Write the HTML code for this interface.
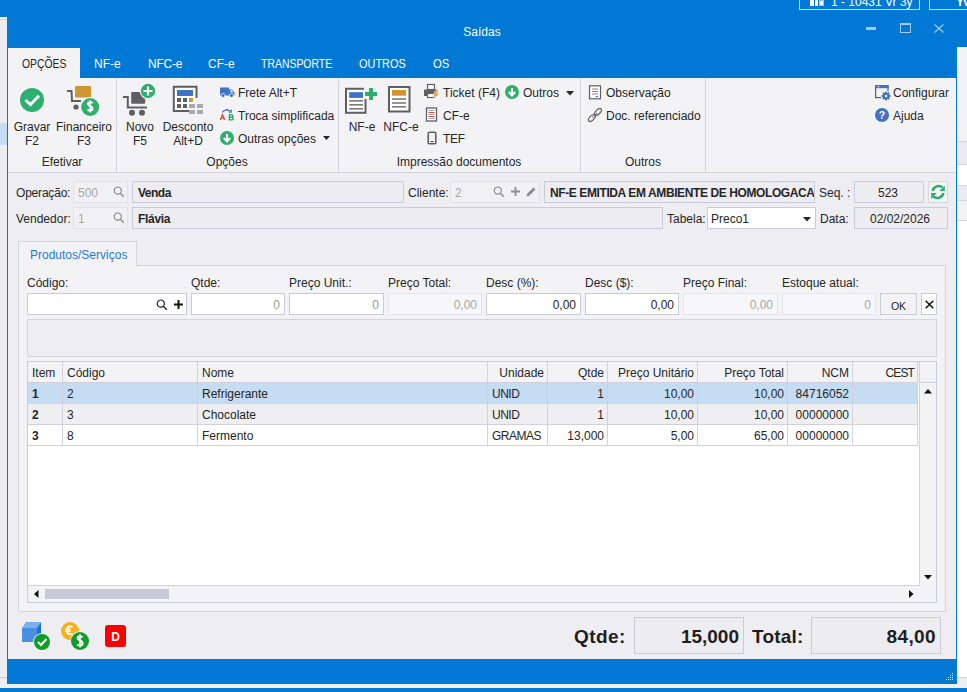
<!DOCTYPE html>
<html><head><meta charset="utf-8">
<style>
*{margin:0;padding:0;box-sizing:border-box}
html,body{width:967px;height:692px;overflow:hidden;background:#edecf1;font-family:"Liberation Sans",sans-serif;font-size:12px;line-height:15px;color:#262626}
.a{position:absolute;white-space:nowrap}
.c{text-align:center}
.r{text-align:right}
svg{position:absolute;overflow:visible}
.box{position:absolute;border:1px solid #c9cbdc;background:#edecf1}
.dis{position:absolute;border:1px solid #e2e1e8;background:#f1f0f5}
.dis2{position:absolute;border:1px solid #e4e4eb;background:#f7f7fa}
.wht{position:absolute;border:1px solid #c9cbdc;background:#fff}
.sep{position:absolute;width:1px;background:#d3d3e0}
</style></head><body>
<!-- background app -->
<div class="a" style="left:0;top:0;width:967px;height:17px;background:#0078d4"></div>
<div class="a" style="left:950px;top:0;width:17px;height:47px;background:#0078d4"></div>
<div class="a" style="left:0;top:17px;width:7px;height:2px;background:#fff"></div>
<div class="a" style="left:0;top:19px;width:7px;height:1px;background:#cfcfd8"></div>
<div class="a" style="left:0;top:123px;width:7px;height:22px;background:#c6dcf4"></div>
<div class="a" style="left:0;top:677px;width:7px;height:1px;background:#c8c8d0"></div>
<!-- right strip -->
<div class="a" style="left:957px;top:47px;width:10px;height:645px;background:#fff"></div>
<div class="a" style="left:957px;top:47px;width:10px;height:94px;background:#f3f3f6"></div>
<div class="a" style="left:957px;top:141px;width:10px;height:24px;background:#ebeaf0;border-top:1px solid #d6d6e0;border-bottom:1px solid #d6d6e0"></div>
<div class="a" style="left:957px;top:185px;width:10px;height:16px;background:#ebeaf0;border-top:1px solid #d6d6e0;border-bottom:1px solid #d6d6e0"></div>
<div class="a" style="left:957px;top:201px;width:10px;height:20px;background:#f3f3f6;border-bottom:1px solid #d6d6e0"></div>
<div class="a" style="left:957px;top:677px;width:10px;height:11px;background:#eeedf2;border-top:1px solid #d0d0d8"></div>
<div class="a" style="left:0;top:684px;width:967px;height:4px;background:#eeedf2"></div>
<div class="a" style="left:0;top:688px;width:967px;height:4px;background:#0078d4"></div>
<!-- top-right buttons of bg app -->
<div class="a" style="left:799px;top:-5px;width:121px;height:15px;border:1px solid #c8dcf0"></div>
<div class="a" style="left:929px;top:-5px;width:60px;height:15px;border:1px solid #c8dcf0"></div>
<div class="a" style="left:810px;top:0;width:4px;height:6px;background:#fff"></div>
<div class="a" style="left:815px;top:0;width:3px;height:6px;background:#fff"></div>
<div class="a" style="left:819px;top:0;width:5px;height:6px;background:#fff;border:1px solid #9cc3ea"></div>
<div class="a" style="left:831px;top:-5px;color:#fff;font-size:12px;line-height:15px">1 - 10431 Vr 3y</div>
<div class="a" style="left:956px;top:-5px;color:#fff;font-size:12px;line-height:15px;font-weight:bold">Yv</div>
<!-- window -->
<div class="a" style="left:7px;top:10px;width:950px;height:674px;background:#0078d4"></div>
<div class="a" style="left:8px;top:78px;width:948px;height:581px;background:#eeedf2"></div>
<div class="a c" style="left:444px;top:25px;width:76px;color:#fff">Saídas</div>
<!-- window controls -->
<div class="a" style="left:866px;top:27px;width:10px;height:3px;background:#a6c9ec"></div>
<div class="a" style="left:900px;top:23px;width:11px;height:10px;border:1px solid #a6c9ec;border-top-width:2px"></div>
<svg style="left:934px;top:24px" width="10" height="9"><path d="M0.5 0.5L9.5 8.5M9.5 0.5L0.5 8.5" stroke="#a6c9ec" stroke-width="1.2"/></svg>

<!-- ribbon -->
<div class="a" style="left:8px;top:78px;width:948px;height:95px;background:#f3f3f6;border-bottom:1px solid #d3d3e0"></div>
<div class="a" style="left:8px;top:48px;width:72px;height:30px;background:#f3f3f6"></div>
<div class="a" style="left:22px;top:57px;transform:scaleX(0.865);transform-origin:0 0">OPÇÕES</div>
<div class="a" style="left:94px;top:57px;color:#fff">NF-e</div>
<div class="a" style="left:148px;top:57px;color:#fff;letter-spacing:-0.2px">NFC-e</div>
<div class="a" style="left:208px;top:57px;color:#fff">CF-e</div>
<div class="a" style="left:261px;top:57px;color:#fff;transform:scaleX(0.87);transform-origin:0 0">TRANSPORTE</div>
<div class="a" style="left:359px;top:57px;color:#fff;transform:scaleX(0.91);transform-origin:0 0">OUTROS</div>
<div class="a" style="left:433px;top:57px;color:#fff;transform:scaleX(0.94);transform-origin:0 0">OS</div>

<div class="sep" style="left:116px;top:78px;height:94px"></div>
<div class="sep" style="left:338px;top:78px;height:94px"></div>
<div class="sep" style="left:580px;top:78px;height:94px"></div>
<div class="sep" style="left:705px;top:78px;height:94px"></div>

<!-- group labels -->
<div class="a c" style="left:12px;top:155px;width:100px">Efetivar</div>
<div class="a c" style="left:177px;top:155px;width:100px">Opções</div>
<div class="a c" style="left:389px;top:155px;width:140px">Impressão documentos</div>
<div class="a c" style="left:593px;top:155px;width:100px">Outros</div>

<!-- big buttons -->
<div class="a c" style="left:1px;top:120px;width:62px">Gravar</div>
<div class="a c" style="left:1px;top:134px;width:62px">F2</div>
<div class="a c" style="left:53px;top:120px;width:62px">Financeiro</div>
<div class="a c" style="left:53px;top:134px;width:62px">F3</div>
<div class="a c" style="left:109px;top:120px;width:62px">Novo</div>
<div class="a c" style="left:109px;top:134px;width:62px">F5</div>
<div class="a c" style="left:157px;top:120px;width:62px">Desconto</div>
<div class="a c" style="left:157px;top:134px;width:62px">Alt+D</div>
<div class="a c" style="left:331px;top:120px;width:62px">NF-e</div>
<div class="a c" style="left:370px;top:120px;width:62px">NFC-e</div>

<!-- small buttons -->
<div class="a" style="left:238px;top:86px">Frete Alt+T</div>
<div class="a" style="left:238px;top:109px">Troca simplificada</div>
<div class="a" style="left:238px;top:132px">Outras opções</div>
<svg style="left:323px;top:136px" width="7" height="4"><path d="M0 0H7L3.5 4Z" fill="#262626"/></svg>
<div class="a" style="left:443px;top:86px">Ticket (F4)</div>
<div class="a" style="left:443px;top:109px">CF-e</div>
<div class="a" style="left:443px;top:132px;letter-spacing:-0.3px">TEF</div>
<div class="a" style="left:523px;top:86px">Outros</div>
<svg style="left:566px;top:91px" width="8" height="5"><path d="M0 0H8L4 4.5Z" fill="#262626"/></svg>
<div class="a" style="left:606px;top:86px">Observação</div>
<div class="a" style="left:606px;top:109px">Doc. referenciado</div>
<div class="a" style="left:893px;top:86px">Configurar</div>
<div class="a" style="left:893px;top:109px">Ajuda</div>

<!-- ICONS -->
<!-- Gravar -->
<svg style="left:20px;top:88px" width="24" height="24"><circle cx="12" cy="12" r="12" fill="#2eaf6e"/><path d="M5.5 12L10.5 16.5L19 7.8" fill="none" stroke="#fff" stroke-width="3"/></svg>
<!-- Financeiro -->
<svg style="left:66px;top:85px" width="34" height="32"><rect x="9" y="1" width="16" height="11.5" rx="1" fill="#cf9531"/><path d="M1 6H5.5L6 16H15" fill="none" stroke="#5f5f5f" stroke-width="2"/><circle cx="10" cy="22" r="2.6" fill="#5f5f5f"/><circle cx="24.2" cy="22" r="10" fill="#f3f3f6"/><circle cx="24.2" cy="22" r="9" fill="#2eaf6e"/><path d="M26.6 18.3C26 17.5 25.1 17.2 24.2 17.2C22.9 17.2 22 17.9 22 19C22 21.4 26.6 20.6 26.6 23.6C26.6 24.8 25.6 25.7 24.2 25.7C23.2 25.7 22.2 25.3 21.6 24.5" fill="none" stroke="#fff" stroke-width="1.9"/><path d="M24.2 15.3V27.6" stroke="#fff" stroke-width="1.5"/></svg>
<!-- Novo -->
<svg style="left:122px;top:83px" width="34" height="34"><path d="M1 14H5.8V24.5H25" fill="none" stroke="#5f5f5f" stroke-width="2"/><rect x="9.2" y="9" width="14" height="11.7" rx="1" fill="#5f5f5f"/><circle cx="10" cy="29.8" r="3" fill="#5f5f5f"/><circle cx="20" cy="29.8" r="3" fill="#5f5f5f"/><circle cx="26" cy="8" r="8.4" fill="#f3f3f6"/><circle cx="26" cy="8" r="7.2" fill="#2eaf6e"/><path d="M26 3.5V12.5M21.5 8H30.5" stroke="#fff" stroke-width="2.2"/></svg>
<!-- Desconto -->
<svg style="left:172px;top:85px" width="34" height="30"><path d="M24.5 13V1.8H1.8V26H18" fill="#fff" stroke="#5f5f5f" stroke-width="2"/><rect x="5" y="5" width="16" height="6" fill="#3d72c4"/><rect x="5" y="13" width="4" height="4" fill="#5f5f5f"/><rect x="11" y="13" width="4" height="4" fill="#5f5f5f"/><rect x="17" y="13" width="4" height="4" fill="#d09530"/><rect x="5" y="19" width="4" height="4" fill="#5f5f5f"/><rect x="11" y="19" width="4" height="4" fill="#5f5f5f"/><rect x="17" y="19" width="6" height="4" fill="#aaa"/><rect x="25" y="19" width="6" height="4" fill="#aaa"/><rect x="17" y="25" width="6" height="4" fill="#aaa"/><rect x="25" y="25" width="6" height="4" fill="#aaa"/></svg>
<!-- Frete truck -->
<svg style="left:220px;top:87px" width="15" height="11"><path d="M0 0.5H9V2.5H12L14.5 5.5V8.5H0Z" fill="#3d72c4"/><circle cx="3" cy="8.5" r="2" fill="#3d72c4" stroke="#f3f3f6" stroke-width="0.8"/><circle cx="11.5" cy="8.5" r="2" fill="#3d72c4" stroke="#f3f3f6" stroke-width="0.8"/><path d="M10.5 3.3H11.8L13.3 5.2H10.5Z" fill="#f3f3f6"/></svg>
<!-- AB -->
<svg style="left:217px;top:105px" width="20" height="18"><path d="M3.3 14.9L5.5 9.6L7.7 14.9M4.1 13H6.9" fill="none" stroke="#d9482b" stroke-width="1.25"/><path d="M12.4 9.6V14.9H14.5C15.7 14.9 16.3 14.3 16.3 13.4C16.3 12.6 15.7 12.1 14.6 12.1H12.4M12.4 9.6H14.3C15.2 9.6 15.8 10.1 15.8 10.8C15.8 11.6 15.2 12.1 14.4 12.1" fill="none" stroke="#22a55a" stroke-width="1.35"/><path d="M5.3 7.4Q8.8 3 12.6 6.1" fill="none" stroke="#3d72c4" stroke-width="1.4"/><path d="M14.8 4V7.7H11.3Z" fill="#3d72c4"/></svg>
<!-- down circle -->
<svg style="left:220px;top:131px" width="14" height="14"><circle cx="7" cy="7" r="7" fill="#2eaf6e"/><path d="M7 3V10M3.8 7L7 10.5L10.2 7" fill="none" stroke="#fff" stroke-width="2"/></svg>
<!-- NF-e icon -->
<svg style="left:344px;top:87px" width="34" height="28"><path d="M20 1.8H2V25.8H21.5V12" fill="#fff" stroke="#5f5f5f" stroke-width="2"/><rect x="5.2" y="5.2" width="13.8" height="5.7" fill="#3d72c4"/><rect x="5.2" y="13" width="13.8" height="1.6" fill="#7a7a7a"/><rect x="5.2" y="17" width="13.8" height="1.6" fill="#7a7a7a"/><rect x="5.2" y="21" width="13.8" height="1.6" fill="#7a7a7a"/><path d="M27 1V13M21 7H33" stroke="#2eaf6e" stroke-width="4"/></svg>
<!-- NFC-e icon -->
<svg style="left:387px;top:85px" width="24" height="28"><rect x="2" y="2" width="20.5" height="24.5" fill="#fff" stroke="#5f5f5f" stroke-width="2"/><rect x="5" y="5" width="14" height="5.7" fill="#d09530"/><rect x="5" y="13.2" width="14" height="1.6" fill="#7a7a7a"/><rect x="5" y="17.2" width="14" height="1.6" fill="#7a7a7a"/><rect x="5" y="21" width="14" height="1.6" fill="#7a7a7a"/></svg>
<!-- Printer -->
<svg style="left:423px;top:83px" width="18" height="18"><rect x="4.5" y="1.5" width="7" height="5" fill="#fff" stroke="#5f5f5f" stroke-width="1.2"/><path d="M1 6.5H14.5V13H1Z" fill="#5f5f5f"/><rect x="4.5" y="10.5" width="7" height="4" fill="#fff" stroke="#5f5f5f" stroke-width="1.2"/><path d="M13.5 7L9.5 12H12.5L10 16.5L16.5 10.5H13.5L15.5 7Z" fill="#e0a030" stroke="#f3f3f6" stroke-width="0.6"/></svg>
<!-- CF-e -->
<svg style="left:425px;top:107px" width="13" height="15"><rect x="1.5" y="1" width="10" height="13" fill="#fff" stroke="#5f5f5f" stroke-width="1.3"/><path d="M3.5 3.5H9.5M3.5 7.5H9.5M3.5 11.5H9.5" stroke="#9aa4ad" stroke-width="0.9"/><path d="M3.5 5.5H9.5M3.5 9.5H9.5" stroke="#e04a3a" stroke-width="1"/></svg>
<!-- TEF phone -->
<svg style="left:427px;top:131px" width="10" height="14"><rect x="1.2" y="1.2" width="7.6" height="11.6" rx="1.2" fill="none" stroke="#5f5f5f" stroke-width="1.6"/><rect x="3.5" y="10" width="3" height="1.2" fill="#5f5f5f"/></svg>
<!-- Outros down circle -->
<svg style="left:505px;top:85px" width="14" height="14"><circle cx="7" cy="7" r="7" fill="#2eaf6e"/><path d="M7 3V10M3.8 7L7 10.5L10.2 7" fill="none" stroke="#fff" stroke-width="2"/></svg>
<!-- Observacao -->
<svg style="left:588px;top:85px" width="14" height="15"><rect x="1.5" y="0.8" width="11" height="13" fill="#fff" stroke="#5f5f5f" stroke-width="1.2"/><path d="M4 4H10M4 6.5H10M4 9H10" stroke="#7a7a7a" stroke-width="0.9"/><path d="M7.5 11.5H10" stroke="#3d72c4" stroke-width="1"/></svg>
<!-- link -->
<svg style="left:584px;top:104px" width="22" height="22"><g fill="none" stroke="#5f5f5f" stroke-width="1.2"><ellipse cx="14" cy="7.9" rx="2.2" ry="4.3" transform="rotate(45 14 7.9)"/><ellipse cx="7.9" cy="14" rx="2.2" ry="4.3" transform="rotate(45 7.9 14)"/><path d="M8.5 13.5L13.5 8.5" stroke-dasharray="1 0.8"/></g></svg>
<!-- Configurar -->
<svg style="left:874px;top:85px" width="18" height="18"><rect x="1.6" y="0.6" width="12.4" height="12" fill="none" stroke="#5f5f5f" stroke-width="1.2"/><rect x="1" y="0" width="13.6" height="3.2" fill="#3d72c4"/><path d="M3.2 1.2H5.8L4.5 2.4Z" fill="#fff"/><circle cx="12.1" cy="11" r="5.2" fill="#f3f3f6"/><rect x="11.1" y="6.6" width="2" height="8.8" transform="rotate(0 12.1 11)" fill="#3d72c4"/><rect x="11.1" y="6.6" width="2" height="8.8" transform="rotate(45 12.1 11)" fill="#3d72c4"/><rect x="11.1" y="6.6" width="2" height="8.8" transform="rotate(90 12.1 11)" fill="#3d72c4"/><rect x="11.1" y="6.6" width="2" height="8.8" transform="rotate(135 12.1 11)" fill="#3d72c4"/><circle cx="12.1" cy="11" r="3.3" fill="#3d72c4"/><circle cx="12.1" cy="11" r="1.3" fill="#f3f3f6"/></svg>
<!-- Ajuda -->
<svg style="left:875px;top:108px" width="14" height="14"><circle cx="7" cy="7" r="7" fill="#3d72c4"/><text x="7" y="11" text-anchor="middle" font-family="Liberation Sans" font-weight="bold" font-size="10.5" fill="#fff">?</text></svg>

<!-- FORM -->
<!-- FORM header rows -->
<div class="a" style="left:16px;top:186px;letter-spacing:-0.2px">Operação:</div>
<div class="dis" style="left:73px;top:181px;width:55px;height:22px"></div>
<div class="a" style="left:78px;top:186px;color:#a8a8a8">500</div>
<svg style="left:113px;top:186px" width="12" height="12"><circle cx="4.8" cy="4.6" r="3.6" fill="none" stroke="#8c8c8c" stroke-width="1.2"/><path d="M7.3 7.2L10.8 10.8" stroke="#8c8c8c" stroke-width="1.4"/></svg>
<div class="box" style="left:132px;top:181px;width:272px;height:22px"></div>
<div class="a" style="left:138px;top:186px;font-weight:bold;letter-spacing:-0.5px">Venda</div>
<div class="a" style="left:408px;top:186px">Cliente:</div>
<div class="dis" style="left:450px;top:181px;width:90px;height:22px"></div>
<div class="a" style="left:455px;top:186px;color:#a8a8a8">2</div>
<svg style="left:493px;top:186px" width="12" height="12"><circle cx="4.8" cy="4.6" r="3.6" fill="none" stroke="#8c8c8c" stroke-width="1.2"/><path d="M7.3 7.2L10.8 10.8" stroke="#8c8c8c" stroke-width="1.4"/></svg>
<svg style="left:511px;top:187px" width="9" height="9"><path d="M4.5 0V9M0 4.5H9" stroke="#8c8c8c" stroke-width="1.8"/></svg>
<svg style="left:525px;top:186px" width="12" height="12"><path d="M1.5 10.5L2.2 7.8L8.5 1.5L10.5 3.5L4.2 9.8Z" fill="#8c8c8c"/></svg>
<div class="box" style="left:544px;top:181px;width:271px;height:22px;overflow:hidden"><div class="a" style="left:5px;top:4px;font-weight:bold;letter-spacing:-0.4px">NF-E EMITIDA EM AMBIENTE DE HOMOLOGACA</div></div>
<div class="a" style="left:819px;top:186px">Seq. :</div>
<div class="box" style="left:854px;top:181px;width:70px;height:22px"></div>
<div class="a c" style="left:854px;top:186px;width:68px">523</div>
<div class="a" style="left:928px;top:181px;width:20px;height:22px;border:1px solid #d6d6df;background:#f3f3f6"></div>
<svg style="left:925px;top:180px" width="27" height="25"><g fill="none" stroke="#2eaf6e" stroke-width="2.6"><path d="M7.6 11A6.2 6.2 0 0 1 17.6 7.4"/><path d="M18.4 13A6.2 6.2 0 0 1 8.4 16.6"/></g><path d="M19.8 5.8V10.9H14.3Z" fill="#2eaf6e"/><path d="M6.2 19V13H11.7Z" fill="#2eaf6e"/></svg>

<div class="a" style="left:16px;top:212px">Vendedor:</div>
<div class="dis" style="left:73px;top:207px;width:55px;height:22px"></div>
<div class="a" style="left:78px;top:212px;color:#a8a8a8">1</div>
<svg style="left:113px;top:212px" width="12" height="12"><circle cx="4.8" cy="4.6" r="3.6" fill="none" stroke="#8c8c8c" stroke-width="1.2"/><path d="M7.3 7.2L10.8 10.8" stroke="#8c8c8c" stroke-width="1.4"/></svg>
<div class="box" style="left:132px;top:207px;width:531px;height:22px"></div>
<div class="a" style="left:138px;top:212px;font-weight:bold;letter-spacing:-0.3px">Flávia</div>
<div class="a" style="left:667px;top:212px">Tabela:</div>
<div class="wht" style="left:707px;top:207px;width:109px;height:22px"></div>
<div class="a" style="left:711px;top:212px">Preco1</div>
<svg style="left:803px;top:217px" width="8" height="5"><path d="M0 0H8L4 4.5Z" fill="#262626"/></svg>
<div class="a" style="left:820px;top:212px">Data:</div>
<div class="box" style="left:854px;top:207px;width:94px;height:22px"></div>
<div class="a c" style="left:854px;top:212px;width:92px">02/02/2026</div>

<!-- tab panel -->
<div class="a" style="left:18px;top:265px;width:928px;height:347px;border:1px solid #d3d3de;background:#f3f3f6"></div>
<div class="a" style="left:18px;top:241px;width:119px;height:25px;border:1px solid #d3d3de;border-bottom:none;background:#f3f3f6"></div>
<div class="a" style="left:30px;top:248px;color:#1e7bd0">Produtos/Serviços</div>

<div class="a" style="left:27px;top:276px">Código:</div>
<div class="a" style="left:191px;top:276px">Qtde:</div>
<div class="a" style="left:289px;top:276px">Preço Unit.:</div>
<div class="a" style="left:388px;top:276px">Preço Total:</div>
<div class="a" style="left:486px;top:276px">Desc (%):</div>
<div class="a" style="left:585px;top:276px">Desc ($):</div>
<div class="a" style="left:683px;top:276px">Preço Final:</div>
<div class="a" style="left:782px;top:276px">Estoque atual:</div>

<div class="wht" style="left:27px;top:293px;width:160px;height:22px"></div>
<svg style="left:156px;top:299px" width="12" height="12"><circle cx="4.8" cy="4.6" r="3.6" fill="none" stroke="#262626" stroke-width="1.2"/><path d="M7.3 7.2L10.8 10.8" stroke="#262626" stroke-width="1.4"/></svg>
<svg style="left:174px;top:300px" width="9" height="9"><path d="M4.5 0V9M0 4.5H9" stroke="#111" stroke-width="2"/></svg>
<div class="wht" style="left:191px;top:293px;width:94px;height:22px"></div>
<div class="a r" style="left:191px;top:298px;width:89px;color:#999">0</div>
<div class="wht" style="left:289px;top:293px;width:95px;height:22px"></div>
<div class="a r" style="left:289px;top:298px;width:90px;color:#999">0</div>
<div class="dis2" style="left:388px;top:293px;width:94px;height:22px"></div>
<div class="a r" style="left:388px;top:298px;width:89px;color:#a6a6a6">0,00</div>
<div class="wht" style="left:486px;top:293px;width:95px;height:22px"></div>
<div class="a r" style="left:486px;top:298px;width:90px">0,00</div>
<div class="wht" style="left:585px;top:293px;width:94px;height:22px"></div>
<div class="a r" style="left:585px;top:298px;width:89px">0,00</div>
<div class="dis2" style="left:683px;top:293px;width:95px;height:22px"></div>
<div class="a r" style="left:683px;top:298px;width:90px;color:#a6a6a6">0,00</div>
<div class="dis2" style="left:782px;top:293px;width:94px;height:22px"></div>
<div class="a r" style="left:782px;top:298px;width:89px;color:#a6a6a6">0</div>
<div class="a" style="left:880px;top:293px;width:37px;height:22px;border:1px solid #c9cbdc;background:#f3f3f6"></div>
<div class="a c" style="left:880px;top:298.5px;width:37px;font-size:10.5px">OK</div>
<div class="wht" style="left:921px;top:293px;width:16px;height:22px"></div>
<svg style="left:925px;top:300px" width="9" height="9"><path d="M0.7 0.7L8.3 8.3M8.3 0.7L0.7 8.3" stroke="#111" stroke-width="1.5"/></svg>

<div class="a" style="left:27px;top:319px;width:910px;height:38px;border:1px solid #d3d3de;background:#eeedf2"></div>

<!-- grid -->
<div class="a" style="left:27px;top:361px;width:910px;height:242px;border:1px solid #c9cbdc;background:#f3f3f6"></div>
<div class="a" style="left:28px;top:382px;width:891px;height:204px;background:#fff"></div>
<div class="a" style="left:28px;top:362px;width:889px;height:21px;background:#f3f3f6;border-bottom:1px solid #d0d0de"></div>
<div class="a" style="left:28px;top:383px;width:889px;height:21px;background:#c5dcf3;border-bottom:1px solid #d0d0de"></div>
<div class="a" style="left:28px;top:404px;width:889px;height:21px;background:#efeff1;border-bottom:1px solid #d0d0de"></div>
<div class="a" style="left:28px;top:425px;width:889px;height:21px;background:#fff;border-bottom:1px solid #d0d0de"></div>
<div class="a" style="left:62px;top:362px;width:1px;height:84px;background:#d0d0de"></div>
<div class="a" style="left:197px;top:362px;width:1px;height:84px;background:#d0d0de"></div>
<div class="a" style="left:487px;top:362px;width:1px;height:84px;background:#d0d0de"></div>
<div class="a" style="left:547px;top:362px;width:1px;height:84px;background:#d0d0de"></div>
<div class="a" style="left:607px;top:362px;width:1px;height:84px;background:#d0d0de"></div>
<div class="a" style="left:697px;top:362px;width:1px;height:84px;background:#d0d0de"></div>
<div class="a" style="left:787px;top:362px;width:1px;height:84px;background:#d0d0de"></div>
<div class="a" style="left:852px;top:362px;width:1px;height:84px;background:#d0d0de"></div>
<div class="a" style="left:917px;top:362px;width:1px;height:84px;background:#d0d0de"></div>
<div class="a" style="left:32px;top:366px;">Item</div>
<div class="a" style="left:67px;top:366px;">Código</div>
<div class="a" style="left:202px;top:366px;">Nome</div>
<div class="a r" style="left:487px;top:366px;width:57px;">Unidade</div>
<div class="a r" style="left:547px;top:366px;width:57px;">Qtde</div>
<div class="a r" style="left:607px;top:366px;width:87px;">Preço Unitário</div>
<div class="a r" style="left:697px;top:366px;width:87px;">Preço Total</div>
<div class="a r" style="left:787px;top:366px;width:62px;">NCM</div>
<div class="a r" style="left:852px;top:366px;width:62px;letter-spacing:-0.9px">CEST</div>
<div class="a" style="left:32px;top:387px;font-weight:bold;">1</div>
<div class="a" style="left:67px;top:387px;">2</div>
<div class="a" style="left:202px;top:387px;">Refrigerante</div>
<div class="a" style="left:492px;top:387px;letter-spacing:-0.5px;">UNID</div>
<div class="a r" style="left:547px;top:387px;width:57px;">1</div>
<div class="a r" style="left:607px;top:387px;width:87px;">10,00</div>
<div class="a r" style="left:697px;top:387px;width:87px;">10,00</div>
<div class="a r" style="left:787px;top:387px;width:62px;">84716052</div>
<div class="a" style="left:32px;top:408px;font-weight:bold;">2</div>
<div class="a" style="left:67px;top:408px;">3</div>
<div class="a" style="left:202px;top:408px;">Chocolate</div>
<div class="a" style="left:492px;top:408px;letter-spacing:-0.5px;">UNID</div>
<div class="a r" style="left:547px;top:408px;width:57px;">1</div>
<div class="a r" style="left:607px;top:408px;width:87px;">10,00</div>
<div class="a r" style="left:697px;top:408px;width:87px;">10,00</div>
<div class="a r" style="left:787px;top:408px;width:62px;">00000000</div>
<div class="a" style="left:32px;top:429px;font-weight:bold;">3</div>
<div class="a" style="left:67px;top:429px;">8</div>
<div class="a" style="left:202px;top:429px;">Fermento</div>
<div class="a" style="left:492px;top:429px;letter-spacing:-0.5px;">GRAMAS</div>
<div class="a r" style="left:547px;top:429px;width:57px;">13,000</div>
<div class="a r" style="left:607px;top:429px;width:87px;">5,00</div>
<div class="a r" style="left:697px;top:429px;width:87px;">65,00</div>
<div class="a r" style="left:787px;top:429px;width:62px;">00000000</div>
<div class="a" style="left:919px;top:362px;width:1px;height:224px;background:#d0d0de"></div><div class="a" style="left:919px;top:382px;width:17px;height:1px;background:#d0d0de"></div>
<div class="a" style="left:28px;top:585px;width:891px;height:1px;background:#d0d0de"></div>
<svg style="left:924px;top:389px" width="8" height="5"><path d="M0 4.5H8L4 0Z" fill="#111"/></svg>
<svg style="left:924px;top:575px" width="8" height="5"><path d="M0 0H8L4 4.5Z" fill="#111"/></svg>
<svg style="left:34px;top:590px" width="5" height="8"><path d="M4.5 0V8L0 4Z" fill="#111"/></svg>
<svg style="left:909px;top:590px" width="5" height="8"><path d="M0 0V8L4.5 4Z" fill="#111"/></svg>
<div class="a" style="left:45px;top:589px;width:124px;height:10px;background:#c8c8d6"></div>

<!-- totals -->
<div class="a" style="left:574px;top:626px;font-size:19px;line-height:22px;font-weight:bold;letter-spacing:0.4px;color:#1e1e1e">Qtde:</div>
<div class="box" style="left:634px;top:617px;width:110px;height:37px"></div>
<div class="a r" style="left:634px;top:626px;width:105px;font-size:19px;line-height:22px;font-weight:bold;color:#1e1e1e">15,000</div>
<div class="a" style="left:752px;top:626px;font-size:19px;line-height:22px;font-weight:bold;letter-spacing:0.2px;color:#1e1e1e">Total:</div>
<div class="box" style="left:811px;top:617px;width:130px;height:37px"></div>
<div class="a r" style="left:811px;top:626px;width:125px;font-size:19px;line-height:22px;font-weight:bold;letter-spacing:0.4px;color:#1e1e1e">84,00</div>
<!-- bottom icons -->
<svg style="left:20px;top:620px" width="32" height="32"><path d="M2 8L6 2H21L17 8Z" fill="#7ab0ea"/><rect x="2" y="8" width="15" height="14" fill="#4a90e2"/><path d="M17 8L21 2V19L17 22Z" fill="#1a73d9"/><circle cx="22" cy="22" r="9" fill="#edecf1"/><circle cx="22" cy="22" r="8" fill="#0f9d2a"/><path d="M18 22L21 25L26.5 19" fill="none" stroke="#fff" stroke-width="2"/></svg>
<svg style="left:60px;top:621px" width="32" height="32"><circle cx="10" cy="10" r="9" fill="#fbb01a"/><path d="M12.5 6.2C11.9 5.6 11.1 5.3 10.2 5.3C8.2 5.3 6.8 7 6.8 9.3C6.8 11.6 8.2 13.3 10.2 13.3C11.1 13.3 11.9 13 12.5 12.4M5 8.3H10.5M5 10.3H10.5" fill="none" stroke="#fff" stroke-width="1.7"/><circle cx="20" cy="20" r="10" fill="#edecf1"/><circle cx="20" cy="20" r="9" fill="#0f9d2a"/><path d="M22.6 16.4C22 15.6 21 15.3 20 15.3C18.6 15.3 17.6 16.1 17.6 17.3C17.6 19.9 22.6 19 22.6 22.3C22.6 23.6 21.5 24.6 20 24.6C18.9 24.6 17.8 24.1 17.2 23.3" fill="none" stroke="#fff" stroke-width="2"/><path d="M20 13.2V26.6" stroke="#fff" stroke-width="1.6"/></svg>
<div class="a" style="left:105px;top:625px;width:21px;height:22px;background:#f00;border-radius:3px"></div>
<div class="a c" style="left:105px;top:630px;width:21px;color:#fff;font-weight:bold;font-size:12px">D</div>

<!-- status bar resize grip -->
<div class="a" style="left:951.5px;top:672.5px;width:1.5px;height:1.5px;background:#fff"></div><div class="a" style="left:949.5px;top:674.5px;width:1.5px;height:1.5px;background:#fff"></div><div class="a" style="left:951.5px;top:674.5px;width:1.5px;height:1.5px;background:#fff"></div><div class="a" style="left:947.5px;top:676.5px;width:1.5px;height:1.5px;background:#fff"></div><div class="a" style="left:949.5px;top:676.5px;width:1.5px;height:1.5px;background:#fff"></div><div class="a" style="left:951.5px;top:676.5px;width:1.5px;height:1.5px;background:#fff"></div><div class="a" style="left:945.5px;top:678.5px;width:1.5px;height:1.5px;background:#fff"></div><div class="a" style="left:947.5px;top:678.5px;width:1.5px;height:1.5px;background:#fff"></div><div class="a" style="left:949.5px;top:678.5px;width:1.5px;height:1.5px;background:#fff"></div><div class="a" style="left:951.5px;top:678.5px;width:1.5px;height:1.5px;background:#fff"></div>
</body></html>
